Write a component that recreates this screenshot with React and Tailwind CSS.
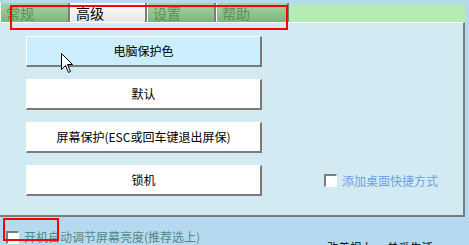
import React from "react";

const tabs = [
  { label: "常规", w: "w-[70px]", active: false },
  { label: "高级", w: "w-[77px]", active: true },
  { label: "设置", w: "w-[69px]", active: false },
  { label: "帮助", w: "w-[73px]", active: false },
];

function Button({ children, hover }) {
  return (
    <div
      className={
        "w-[236px] h-[31px] flex items-center justify-center text-[12px] text-black border-t border-l border-white border-r-2 border-b-2 border-r-[#7a7a7a] border-b-[#7a7a7a] " +
        (hover ? "bg-[#cbedfc]" : "bg-white")
      }
    >
      {children}
    </div>
  );
}

function Check() {
  return (
    <span className="w-[13px] h-[13px] shrink-0 bg-white border-t-2 border-l-2 border-t-[#7c7c7c] border-l-[#7c7c7c] border-b border-r border-b-white border-r-white" />
  );
}

export default function App() {
  return (
    <div
      className="relative w-[469px] h-[245px] overflow-hidden bg-[#b5d9ee]"
      style={{ fontFamily: '"Noto Sans CJK SC", "Noto Sans", sans-serif' }}
    >
      <div className="pt-[3px] w-[465px]">
        {/* tab strip */}
        <div className="flex h-[19px] bg-[#b4ecb4]">
          {tabs.map((t) => (
            <div
              key={t.label}
              className={
                t.w +
                " h-full flex items-center pl-[5px] text-[14px] leading-none border-l border-white border-r-2 border-r-[#7c7c7c] " +
                (t.active
                  ? "bg-gradient-to-b from-[#fdfdfd] to-[#e6e6e6] text-black"
                  : "bg-gradient-to-b from-[#a3d7a3] to-[#7fb47f] text-[#5d8f5d]")
              }
            >
              {t.label}
            </div>
          ))}
        </div>

        {/* panel */}
        <div className="h-[195px] bg-[#d2eaf2] border-t border-white border-r-2 border-b-2 border-r-[#7c7c7c] border-b-[#7c7c7c] pl-[26px] pt-[13px] flex flex-col gap-[12px]">
          <Button hover>电脑保护色</Button>
          <Button>默认</Button>
          <Button>屏幕保护(ESC或回车键退出屏保)</Button>
          <div className="flex items-center">
            <Button>锁机</Button>
            <label className="ml-[62px] flex items-center gap-[5px] text-[12px] text-[#6f9fe6]">
              <Check />
              添加桌面快捷方式
            </label>
          </div>
        </div>
      </div>

      {/* bottom */}
      <div className="flex items-start pl-[6px]">
        <label className="w-[321px] mt-[11px] flex items-center gap-[5px] text-[12px] text-[#4f8a88]">
          <Check />
          开机自动调节屏幕亮度(推荐选上)
        </label>
        <div className="mt-[22px] flex gap-[14px] text-[11.5px] text-black whitespace-nowrap">
          <span>改善视力</span>
          <span>关爱生活</span>
        </div>
      </div>

      {/* mouse pointer */}
      <svg
        className="absolute left-[61px] top-[53px]"
        width="13"
        height="21"
        viewBox="0 0 13 21"
      >
        <path
          d="M0.5 0.5 L0.5 16.5 L4.5 12.5 L7.5 19.5 L9.5 18.5 L6.5 11.5 L11.5 11.5 Z"
          fill="white"
          stroke="black"
          strokeWidth="1"
        />
      </svg>

      {/* annotation boxes */}
      <div className="absolute left-[10px] top-[5px] w-[278px] h-[25px] border-2 border-[#ff0000]" />
      <div className="absolute left-[3px] top-[218px] w-[56px] h-[23px] border-2 border-[#ff0000]" />
    </div>
  );
}
